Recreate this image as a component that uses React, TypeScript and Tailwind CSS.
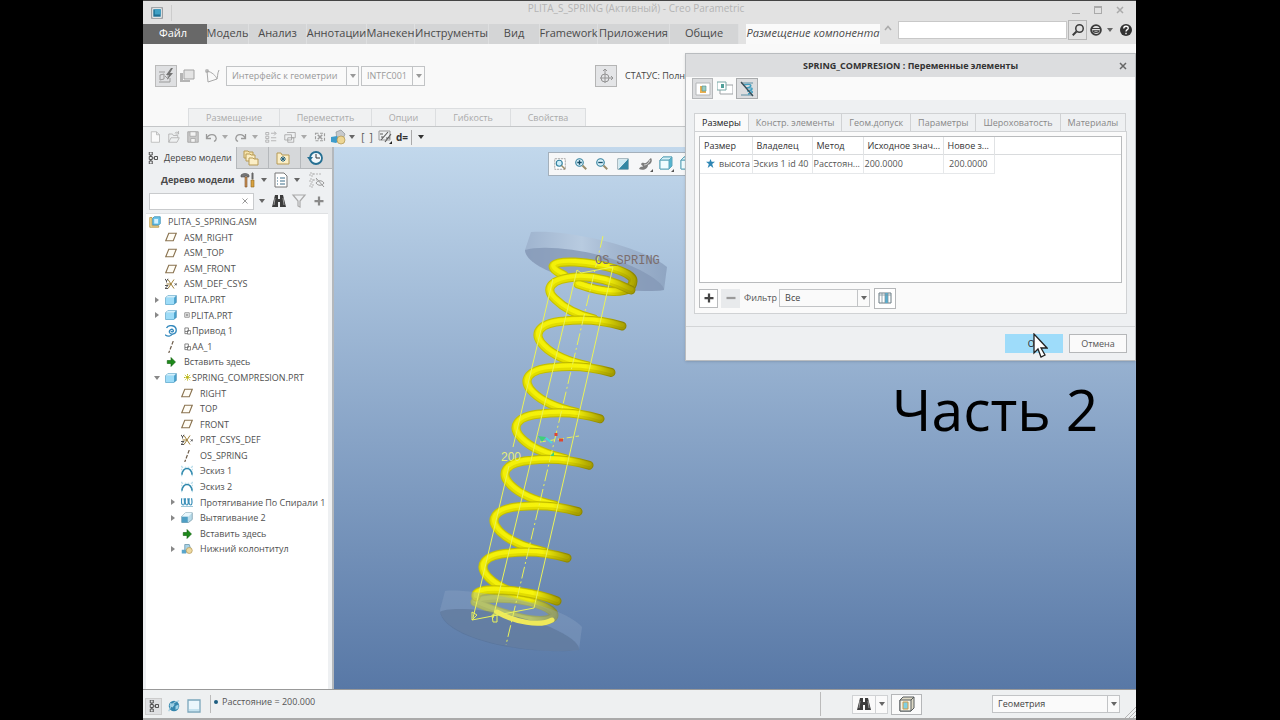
import { useState } from "react";
import type { ReactNode } from "react";
import clsx from "clsx";

type IconProps = { className?: string };

const Svg = ({ className = "h-4 w-4", children }: { className?: string; children: ReactNode }) => (
  <svg viewBox="0 0 16 16" fill="none" className={clsx("block shrink-0", className)} aria-hidden="true">
    {children}
  </svg>
);

/* ---------- icons ---------- */

const Caret = ({ className = "h-2 w-2 text-[#666]" }: IconProps) => (
  <Svg className={className}>
    <path d="M2 4h12l-6 8z" fill="currentColor" />
  </Svg>
);

const AppIcon = () => (
  <Svg className="h-3 w-3">
    <path d="M1 1h14v14H1z" fill="#fff" stroke="#8b8f93" strokeWidth="1.5" />
    <path d="M3 3h10v10H3z" fill="#1f6f93" />
    <path d="M5 3h8v7H5z" fill="#3fa0c4" />
  </Svg>
);

const PlaneIcon = () => (
  <Svg className="h-3 w-3">
    <path d="M5 3h10l-4 10H1z" stroke="#8a7350" strokeWidth="1.5" fill="#fffdf6" />
  </Svg>
);

const CsysIcon = () => (
  <Svg className="h-3 w-3">
    <path d="M8 8 4 2M8 8l4-6M8 8l-4 6M8 8l4 6M8 8H2" stroke="#9a7a30" strokeWidth="1.3" />
    <path d="M0 1l2 3 2-3M2 4v2M0 10h4l-4 4h4M13 7l3 3M16 7l-3 3" stroke="#444" strokeWidth="1.2" />
  </Svg>
);

const AxisIcon = () => (
  <Svg className="h-3 w-3">
    <path d="M11 0 5 16" stroke="#6d5c4a" strokeWidth="1.6" strokeDasharray="5 2" />
  </Svg>
);

const AsmIcon = () => (
  <Svg className="h-3 w-3">
    <path d="M1 2h3v11h9v2H1z" fill="#f3dc97" stroke="#b08d3a" />
    <path d="M5 3l2-2h8v9l-2 2H5z" fill="#6fc5ea" stroke="#2d86ae" />
    <path d="M7 4h5v6H7z" fill="#d5f2ff" />
  </Svg>
);

const PartIcon = () => (
  <Svg className="h-3 w-3">
    <path d="M1 5l3-3h11v9l-3 3H1z" fill="#4fa6d0" stroke="#3684ad" />
    <path d="M1 5h11v9H1z" fill="#9ddcf8" />
    <path d="M1 5l3-3h11l-3 3z" fill="#d3f1fd" />
  </Svg>
);

const MotorIcon = () => (
  <Svg className="h-3 w-3">
    <path d="M2 4c3-5 13-4 13 3 0 5-7 7-9 3-1-3 3-6 5-3 1 2-2 3-3 1" stroke="#3489bd" strokeWidth="1.8" />
    <path d="M0 13c4 3 8 2 10-1" stroke="#3489bd" strokeWidth="1.8" />
  </Svg>
);

const InsertIcon = () => (
  <Svg className="h-3 w-3">
    <path d="M3 6h5V2l6 6-6 6v-4H3z" fill="#1d8a1a" stroke="#0d5c0c" strokeWidth="0.8" />
  </Svg>
);

const SketchIcon = () => (
  <Svg className="h-3 w-3">
    <path d="M1 13c2-11 12-11 14 0" stroke="#2c86ab" strokeWidth="2" />
    <path d="M1 1v14M15 1v14M1 3h14" stroke="#8cc5dc" strokeDasharray="2 2" />
  </Svg>
);

const HelixIcon = () => (
  <Svg className="h-3 w-3">
    <path d="M1 3c-1 6 0 9 2 9s2-5 1-9M6 3c-1 6 0 9 2 9s2-5 1-9M11 3c-1 6 0 9 2 9s2-5 1-9" stroke="#3a8fb8" strokeWidth="1.6" />
    <path d="M0 14h16" stroke="#7cb4cc" />
  </Svg>
);

const ExtrudeIcon = () => (
  <Svg className="h-3 w-3">
    <path d="M6 1h9v9l-5 4H1V6z" fill="#b9dcea" stroke="#7195a5" />
    <path d="M1 6h8v8H1z" fill="#4f9fc4" />
    <path d="M6 1h9l-5 5H1z" fill="#e9f7fc" />
  </Svg>
);

const FooterIcon = () => (
  <Svg className="h-3 w-3">
    <path d="M5 2h6l2 6-3 4H5z" fill="#a9d3e6" stroke="#6692a8" />
    <path d="M1 9h6v5H1z" fill="#5aa5cb" />
    <circle cx="11" cy="10" r="4" fill="#eed9a0" stroke="#b49b5c" />
  </Svg>
);

const TreeIcon = ({ className = "h-3 w-3" }: IconProps) => (
  <Svg className={className}>
    <path d="M3 0h4v4H3zM3 6h4v4H3zM3 12h4v4H3zM10 6h4v4h-4zM5 4v2M5 10v2M7 8h3" stroke="#444" strokeWidth="1.2" />
  </Svg>
);

const FoldersIcon = () => (
  <Svg className="h-4 w-4">
    <path d="M1 1h4l1 1h4v6H1z" fill="#f6e3ab" stroke="#b79a55" />
    <path d="M3 4h4l1 1h4v6H3z" fill="#fbeec6" stroke="#b79a55" />
    <path d="M6 8h4l1 1h4v6H6z" fill="#fbeec6" stroke="#b79a55" />
  </Svg>
);

const FavFolderIcon = () => (
  <Svg className="h-4 w-4">
    <path d="M2 3h4l1 2h7v9H2z" fill="#fbeec6" stroke="#b79a55" />
    <path d="M8 6v6M5 9h6M6 7l4 4M10 7l-4 4" stroke="#256382" />
  </Svg>
);

const HistoryIcon = () => (
  <Svg className="h-4 w-4">
    <circle cx="9" cy="8" r="6" fill="#f1f8fb" stroke="#256f92" strokeWidth="1.8" />
    <path d="M9 4v4h4" stroke="#333" />
    <path d="M0 7h6l-3 4z" fill="#256f92" />
  </Svg>
);

const ToolsIcon = () => (
  <Svg className="h-4 w-4">
    <path d="M1 5V3c2-2 6-2 8 0v2H7v-1H5v1z" fill="#777" stroke="#555" strokeWidth="0.6" />
    <path d="M5 5h2v10H5z" fill="#c98f55" stroke="#7d5529" strokeWidth="0.6" />
    <path d="M12 1h1v6h-1z" fill="#666" stroke="#666" />
    <path d="M11 8h3v7h-3z" fill="#d9a23f" stroke="#8a6524" strokeWidth="0.6" />
  </Svg>
);

const ListIcon = () => (
  <Svg className="h-4 w-4">
    <path d="M2 1h9l3 3v11H2z" fill="#fff" stroke="#777" />
    <path d="M4 6h1M7 6h5M4 9h1M7 9h5M4 12h1M7 12h5" stroke="#3a6d88" />
  </Svg>
);

const TreeOffIcon = () => (
  <Svg className="h-4 w-4">
    <path d="M1 1h3v3H1zM1 7h3v3H1zM1 12h3v3H1zM4 2h9M4 8h4" stroke="#b5b5b5" strokeDasharray="2 1" />
    <path d="M7 11c2-3 6-3 8 0-2 3-6 3-8 0zM7 6l8 9" stroke="#999" />
  </Svg>
);

const Binoculars = ({ className = "h-4 w-4" }: IconProps) => (
  <Svg className={className}>
    <path d="M4 2h3v4h2V2h3l3 12H9V9H7v5H1z" fill="#3c3c3c" />
    <path d="M4 5l-1 7M12 5l1 7" stroke="#999" />
  </Svg>
);

const FilterIcon = () => (
  <Svg className="h-4 w-4">
    <path d="M2 2h12L9 8v6l-2-1V8z" stroke="#aaa" strokeWidth="1.2" />
  </Svg>
);

const PlusIcon = ({ className = "h-3 w-3 text-[#8a8a8a]" }: IconProps) => (
  <Svg className={className}>
    <path d="M8 2v12M2 8h12" stroke="currentColor" strokeWidth="3" />
  </Svg>
);

const MinusIcon = () => (
  <Svg className="h-3 w-3">
    <path d="M2 8h12" stroke="#9a9a9a" strokeWidth="3" />
  </Svg>
);

const CloseIcon = ({ className = "h-2 w-2 text-[#666]" }: IconProps) => (
  <Svg className={className}>
    <path d="M2 2l12 12M14 2 2 14" stroke="currentColor" strokeWidth="3" />
  </Svg>
);

const GreyNew = () => (
  <Svg className="h-3 w-3">
    <path d="M3 1h7l4 4v10H3zM10 1v4h4" stroke="#b0b0b0" fill="#fafafa" />
  </Svg>
);
const GreyOpen = () => (
  <Svg className="h-3 w-3">
    <path d="M1 15V4h5l1 2h6v3M1 15l3-6h11l-3 6zM9 3c2-2 4-2 5 0M14 0v4h-4" stroke="#a9a9a9" />
  </Svg>
);
const GreySave = () => (
  <Svg className="h-3 w-3">
    <path d="M1 1h14v14H1z" fill="#c9c9c9" stroke="#9c9c9c" />
    <path d="M4 1h8v6H4zM5 10h6v5H5z" fill="#f3f3f3" stroke="#a4a4a4" />
  </Svg>
);
const UndoIcon = ({ className = "h-3 w-3" }: IconProps) => (
  <Svg className={className}>
    <path d="M2 4v6h6M2 10c3-7 12-7 13 0 0 2-1 3-3 4" stroke="#9a9a9a" strokeWidth="1.7" />
  </Svg>
);
const RegenIcon = () => (
  <Svg className="h-3 w-3">
    <path d="M1 2h4v3H1zM1 7h4v3H1zM1 12h4v3H1zM8 9h7M8 13h7M8 3h6M12 1l3 2-3 3" stroke="#a4a4a4" />
  </Svg>
);
const WindowsIcon = () => (
  <Svg className="h-3 w-3">
    <path d="M1 5h9v7H1zM4 2h11v7h-5M5 9h8v6H5z" stroke="#9d9d9d" />
  </Svg>
);
const CloseWinIcon = () => (
  <Svg className="h-3 w-3">
    <path d="M2 3h12v10H2z" stroke="#9d9d9d" strokeWidth="1.5" strokeDasharray="4 2" />
    <path d="M5 5l6 6M11 5l-6 6" stroke="#9d9d9d" strokeWidth="2" />
  </Svg>
);
const ShapesIcon = () => (
  <Svg className="h-4 w-4">
    <path d="M6 3l5-2 4 4-2 5-6 1z" fill="#c6c9cb" stroke="#8a9096" strokeWidth="0.7" />
    <path d="M1 8l6-1 3 4-4 3-5-1z" fill="#3d9ccb" />
    <circle cx="11" cy="11" r="4" fill="#edd694" stroke="#ad9350" strokeWidth="0.7" />
  </Svg>
);
const PercentIcon = () => (
  <Svg className="h-4 w-4">
    <path d="M2 2h11v9H2z" stroke="#999" />
    <path d="M4 11 11 3M3 5h3M9 9h4M8 13l6-8M4 8h3" stroke="#5a5a5a" strokeWidth="1.1" />
    <path d="M15 12v3h-3z" fill="#222" />
  </Svg>
);

const SearchGlass = () => (
  <Svg className="h-3 w-3">
    <circle cx="10" cy="6" r="5" stroke="#3b3b3b" strokeWidth="2" />
    <path d="M6 10l-5 5" stroke="#3b3b3b" strokeWidth="2.5" />
  </Svg>
);
const PortalIcon = () => (
  <Svg className="h-3 w-3">
    <circle cx="8" cy="8" r="6.5" stroke="#3b3b3b" strokeWidth="2.5" />
    <path d="M2 6h12M4 9h8c0 3-8 3-8 0z" stroke="#3b3b3b" strokeWidth="1.5" />
  </Svg>
);
const HelpIcon = () => (
  <Svg className="h-3 w-3">
    <circle cx="8" cy="8" r="8" fill="#333" />
    <path d="M5 6c0-4 6-4 6-.5 0 2-3 2-3 4.5M8 11.5v2" stroke="#fff" strokeWidth="1.8" />
  </Svg>
);

const ManualIcon = () => (
  <Svg className="h-4 w-4">
    <path d="M1 4h6M1 14h11v-4M2 7l4-1v5l-4 1zM7 8l3 3v-4" stroke="#9a9a9a" />
    <path d="M13 0 8 7h3l-2 5 6-7h-3l3-5z" fill="#747474" />
  </Svg>
);
const CopyIcon = () => (
  <Svg className="h-4 w-4">
    <path d="M5 2h10v9H5z" fill="#e4e4e4" stroke="#a3a3a3" />
    <path d="M1 5h3v7h7v2H1z" fill="#b5b5b5" />
  </Svg>
);
const ConstraintIcon = () => (
  <Svg className="h-4 w-4">
    <circle cx="3" cy="3" r="2" fill="#bbb" />
    <path d="M3 3c5 1 9 5 10 8M15 2c-2 4-1 7-2 9l-9 3-1-11" stroke="#a8a8a8" />
  </Svg>
);
const DragIcon = () => (
  <Svg className="h-4 w-4">
    <circle cx="7" cy="10" r="4" stroke="#949494" />
    <path d="M7 1v14M2 10h13M5 3l2-2 2 2M13 8l2 2-2 2" stroke="#949494" />
  </Svg>
);

const ZoomFitIcon = () => (
  <Svg className="h-3 w-3">
    <path d="M1 1h14v14H1z" fill="#fff" stroke="#8b8b8b" strokeDasharray="3 1" />
    <circle cx="7" cy="7" r="4" fill="#cdeefa" stroke="#33809e" strokeWidth="1.5" />
    <path d="M10 10l5 5" stroke="#9a8d6b" strokeWidth="2" />
  </Svg>
);
const ZoomIcon = ({ plus }: { plus?: boolean }) => (
  <Svg className="h-3 w-3">
    <circle cx="6" cy="6" r="5" fill="#d9f1fa" stroke="#33809e" strokeWidth="1.5" />
    <path d="M10 10l5 5" stroke="#9a8d6b" strokeWidth="2.5" />
    <path d={plus ? "M6 3v6M3 6h6" : "M3 6h6"} stroke="#174e68" strokeWidth="1.8" />
  </Svg>
);
const RepaintIcon = () => (
  <Svg className="h-3 w-3">
    <path d="M1 1h14v14H1z" fill="#fff" stroke="#6e8c98" />
    <path d="M15 1v14H2z" fill="#3387a3" />
    <path d="M2 2v12L14 2z" fill="#cdeaf3" />
  </Svg>
);
const RenderIcon = () => (
  <Svg className="h-4 w-4">
    <path d="M1 13c2-4 3-1 4-3-3-1-2-4 1-3 3 1 5-4 7-5 2 3 0 6-3 7 0 4-5 6-9 4z" fill="#7d7d7d" />
    <path d="M6 9c3 0 5-2 6-5" stroke="#d4d4d4" />
    <path d="M15 13v3h-3z" fill="#555" />
  </Svg>
);
const DisplayCube = () => (
  <Svg className="h-4 w-4">
    <path d="M1 4l3-3h9v9l-3 3H1z" fill="#54b4cf" stroke="#5fa5ba" />
    <path d="M1 4h9v9H1z" fill="#f0fcff" stroke="#5fa5ba" />
    <path d="M1 4l3-3h9l-3 3z" fill="#d6f2f9" stroke="#5fa5ba" />
    <path d="M15 13v3h-3z" fill="#555" />
  </Svg>
);

const ModelWinIcon = () => (
  <Svg className="h-4 w-4">
    <path d="M1 2h14v12H1z" fill="#fff" stroke="#b5b7b9" />
    <path d="M5 5h2v5h4v2H5z" fill="#ecb04e" />
    <path d="M7 5h4v5H7z" fill="#9accc2" stroke="#4d8f8d" strokeWidth="0.6" />
  </Svg>
);
const ModelWin2Icon = () => (
  <Svg className="h-4 w-4">
    <path d="M3 4h13v9H3z" fill="#fff" stroke="#9fa3a6" />
    <path d="M0 1h9v8H0z" fill="#fff" stroke="#79a7a6" />
    <path d="M4 3h3v4H4z" fill="#4f9f99" />
  </Svg>
);
const SpringOffIcon = () => (
  <Svg className="h-4 w-4">
    <path d="M2 2h12M2 14h12" stroke="#5d8ea2" />
    <path d="M4 4c10-2 10 2 3 3 8-1 8 2 1 3 7-1 7 2 1 3" stroke="#3f9ec0" strokeWidth="1.4" />
    <path d="M2 1l12 14" stroke="#3c4c55" strokeWidth="1.3" />
  </Svg>
);
const ColumnsIcon = () => (
  <Svg className="h-4 w-4">
    <path d="M2 3h12v10H2z" fill="#fff" stroke="#6b7a82" />
    <path d="M8 3h3v10H8z" fill="#56aed0" />
    <path d="M2 5h12M5 3v10M8 3v10M11 3v10" stroke="#7e949e" strokeWidth="0.8" />
  </Svg>
);
const GlobeIcon = () => (
  <Svg className="h-3 w-3">
    <circle cx="8" cy="8" r="7" fill="#3586ad" />
    <path d="M3 4l6 2-3 4-4-2zM10 8l4-2v5l-4 2z" fill="#9fd3e8" />
    <path d="M1 15C3 8 8 2 15 1" stroke="#9ecbde" strokeWidth="1.5" />
  </Svg>
);
const BlankWinIcon = () => (
  <Svg className="h-4 w-4">
    <path d="M2 2h12v12H2z" fill="#eaf6fc" stroke="#7ba6bc" strokeWidth="1.3" />
    <path d="M3 11h10v2H3z" fill="#c4e2ef" />
  </Svg>
);
const BoxSelectIcon = () => (
  <Svg className="h-4 w-4">
    <path d="M1 4l3-3h11v11l-3 3H1z" fill="#ded9c5" stroke="#555a5d" />
    <path d="M1 4h11v11H1zM12 4l3-3" stroke="#555a5d" fill="#f6f3e6" />
    <path d="M4 6h5v7H4z" fill="#7fd0e4" stroke="#cf9a4b" />
  </Svg>
);

/* ---------- small controls ---------- */

interface DropdownProps {
  label: string;
  options: string[];
  className?: string;
  muted?: boolean;
}

function Dropdown({ label, options, className, muted }: DropdownProps) {
  return (
    <div className={clsx("relative flex border border-[#c2c4c6] bg-[#fafafa]", className)}>
      <select
        aria-label={label}
        className={clsx(
          "min-w-0 flex-1 appearance-none bg-transparent pl-[5px] text-[9px] outline-none",
          muted ? "text-[#999]" : "text-[#444]"
        )}
      >
        {options.map((o) => (
          <option key={o}>{o}</option>
        ))}
      </select>
      <span className="pointer-events-none flex w-3 items-center justify-center border-l border-[#c2c4c6]">
        <Caret className={clsx("h-2 w-2", muted ? "text-[#999]" : "text-[#666]")} />
      </span>
    </div>
  );
}

/* ---------- top area ---------- */

const ribbonTabs = [
  { label: "Модель", width: "w-[42px]" },
  { label: "Анализ", width: "w-[58px]" },
  { label: "Аннотации", width: "w-[60px]" },
  { label: "Манекен", width: "w-[48px]" },
  { label: "Инструменты", width: "w-[74px]" },
  { label: "Вид", width: "w-[51px]" },
  { label: "Framework", width: "w-[58px]" },
  { label: "Приложения", width: "w-[72px]" },
  { label: "Общие", width: "w-[69px]" },
];

function TitleBar() {
  return (
    <header className="flex h-6 items-center border-t border-[#444] bg-[#e2e2e2]">
      <div className="flex h-4 w-[29px] items-center justify-center border-r border-[#ccc]">
        <AppIcon />
      </div>
      <h1 className="flex-1 pb-2 pl-7 text-center text-[10px] text-[#b4b4b4]">
        PLITA_S_SPRING (Активный) - Creo Parametric
      </h1>
      <div className="flex items-center gap-[14px] pb-[6px] pr-3 text-[#aaa]">
        <button aria-label="Свернуть" className="h-2 w-2 border-b border-current" />
        <button aria-label="Развернуть" className="h-2 w-2 border border-t-2 border-current" />
        <button aria-label="Закрыть">
          <CloseIcon className="h-2 w-2" />
        </button>
      </div>
    </header>
  );
}

function RibbonTabs() {
  return (
    <nav className="flex h-5 bg-[#e2e2e2] text-[11px] leading-[18px] text-[#4a4a4a]">
      <button className="w-16 shrink-0 bg-[#686868] pb-[2px] pr-1 text-white">Файл</button>
      <div className="flex shrink-0 bg-[#d4d5d6]">
        {ribbonTabs.map((tab) => (
          <button
            key={tab.label}
            className={clsx("flex justify-center whitespace-nowrap border-r border-[#dedfe0]", tab.width)}
          >
            {tab.label}
          </button>
        ))}
      </div>
      <button className="ml-[7px] flex w-[134px] shrink-0 justify-center whitespace-nowrap bg-[#fafafa] italic">
        Размещение компонента
      </button>
      <Svg className="ml-1 h-2 w-2 text-[#aaa]">
        <path d="M2 12l6-7 6 7" stroke="currentColor" strokeWidth="3" />
      </Svg>
      <div className="-mt-1 mb-1 ml-[6px] flex min-w-0 flex-1 items-center pr-1">
        <input
          aria-label="Поиск"
          className="h-[18px] min-w-0 flex-1 border border-[#c8c8c8] bg-white px-1 outline-none"
        />
        <button
          aria-label="Найти"
          className="ml-px flex h-5 w-[19px] shrink-0 items-center justify-center border border-[#b5b5b5]"
        >
          <SearchGlass />
        </button>
        <button aria-label="Портал" className="ml-[3px] flex items-center gap-1">
          <PortalIcon />
          <Caret />
        </button>
        <button aria-label="Справка" className="ml-[6px]">
          <HelpIcon />
        </button>
      </div>
    </nav>
  );
}

const dashboardTabs = [
  { label: "Размещение", width: "w-[91px]" },
  { label: "Переместить", width: "w-[92px]" },
  { label: "Опции", width: "w-[64px]" },
  { label: "Гибкость", width: "w-[75px]" },
  { label: "Свойства", width: "w-[75px]" },
];

function Dashboard() {
  return (
    <section className="flex h-[83px] flex-col justify-between border-b border-[#c4c6c8] bg-[#f9f9f9] pt-5">
      <div className="flex h-6 items-center pl-3">
        <button
          aria-label="Разместить вручную"
          className="flex h-[22px] w-[22px] items-center justify-center border border-[#bbb] bg-[#dfe0e2]"
        >
          <ManualIcon />
        </button>
        <button aria-label="Интерфейс" className="ml-[2px]">
          <CopyIcon />
        </button>
        <button aria-label="Ограничения" className="ml-[9px]">
          <ConstraintIcon />
        </button>
        <Dropdown label="Тип интерфейса" options={["Интерфейс к геометрии"]} className="ml-[6px] h-5 w-[133px]" muted />
        <Dropdown label="Интерфейс" options={["INTFC001"]} className="ml-[2px] h-5 w-[64px]" muted />
        <button
          aria-label="Перетащить"
          className="ml-[170px] flex h-[22px] w-[22px] items-center justify-center border border-[#b5b5b5] bg-[#e4e5e7]"
        >
          <DragIcon />
        </button>
        <p className="ml-2 whitespace-nowrap text-[9px] text-[#444]">СТАТУС: Полностью ограничено</p>
      </div>
      <div className="ml-[45px] flex h-[18px] self-start border-l border-t border-[#dcdee0] bg-[#f0f1f2]">
        {dashboardTabs.map((tab) => (
          <button key={tab.label} className={clsx("border-r border-[#dcdee0] text-[9px] text-[#aaa]", tab.width)}>
            {tab.label}
          </button>
        ))}
      </div>
    </section>
  );
}

function QuickAccess() {
  return (
    <div className="flex h-5 items-center bg-[#eef0f1] pl-[6px] text-[10px] text-[#666]">
      <div className="flex items-center gap-[7px]">
        <button aria-label="Создать"><GreyNew /></button>
        <button aria-label="Открыть"><GreyOpen /></button>
        <button aria-label="Сохранить"><GreySave /></button>
      </div>
      <button aria-label="Отменить" className="ml-[6px] flex items-center gap-1">
        <UndoIcon />
        <Caret className="h-2 w-2 text-[#aaa]" />
      </button>
      <button aria-label="Повторить" className="ml-[6px] flex items-center gap-1">
        <UndoIcon className="h-3 w-3 -scale-x-100" />
        <Caret className="h-2 w-2 text-[#aaa]" />
      </button>
      <button aria-label="Регенерировать" className="ml-[6px]"><RegenIcon /></button>
      <button aria-label="Окна" className="ml-[7px] flex items-center gap-1">
        <WindowsIcon />
        <Caret className="h-2 w-2 text-[#aaa]" />
      </button>
      <button aria-label="Закрыть окно" className="ml-[6px]"><CloseWinIcon /></button>
      <button aria-label="Сечение" className="ml-[4px] flex items-center gap-[2px]">
        <ShapesIcon />
        <Caret />
      </button>
      <button className="ml-[3px] w-4 whitespace-nowrap text-[#555]">[&nbsp;&nbsp;]</button>
      <button aria-label="Отношения" className="ml-[2px]"><PercentIcon /></button>
      <button className="ml-[3px] border-r border-[#aaa] pr-[3px] font-bold text-[#333]">d=</button>
      <button aria-label="Настроить" className="ml-[5px]"><Caret className="h-2 w-2 text-[#333]" /></button>
    </div>
  );
}

/* ---------- model tree ---------- */

interface TreeNode {
  label: string;
  icon: () => ReactNode;
  level: number;
  arrow?: "open" | "closed";
  mark?: "box" | "link" | "flex";
}

const treeNodes: TreeNode[] = [
  { label: "PLITA_S_SPRING.ASM", icon: AsmIcon, level: 0 },
  { label: "ASM_RIGHT", icon: PlaneIcon, level: 1 },
  { label: "ASM_TOP", icon: PlaneIcon, level: 1 },
  { label: "ASM_FRONT", icon: PlaneIcon, level: 1 },
  { label: "ASM_DEF_CSYS", icon: CsysIcon, level: 1 },
  { label: "PLITA.PRT", icon: PartIcon, level: 1, arrow: "closed" },
  { label: "PLITA.PRT", icon: PartIcon, level: 1, arrow: "closed", mark: "box" },
  { label: "Привод 1", icon: MotorIcon, level: 1, mark: "link" },
  { label: "AA_1", icon: AxisIcon, level: 1, mark: "link" },
  { label: "Вставить здесь", icon: InsertIcon, level: 1 },
  { label: "SPRING_COMPRESION.PRT", icon: PartIcon, level: 1, arrow: "open", mark: "flex" },
  { label: "RIGHT", icon: PlaneIcon, level: 2 },
  { label: "TOP", icon: PlaneIcon, level: 2 },
  { label: "FRONT", icon: PlaneIcon, level: 2 },
  { label: "PRT_CSYS_DEF", icon: CsysIcon, level: 2 },
  { label: "OS_SPRING", icon: AxisIcon, level: 2 },
  { label: "Эскиз 1", icon: SketchIcon, level: 2 },
  { label: "Эскиз 2", icon: SketchIcon, level: 2 },
  { label: "Протягивание По Спирали 1", icon: HelixIcon, level: 2, arrow: "closed" },
  { label: "Вытягивание 2", icon: ExtrudeIcon, level: 2, arrow: "closed" },
  { label: "Вставить здесь", icon: InsertIcon, level: 2 },
  { label: "Нижний колонтитул", icon: FooterIcon, level: 2, arrow: "closed" },
];

const levelPadding = ["pl-[3px]", "pl-[3px]", "pl-[19px]"];

function NodeMark({ mark }: { mark: TreeNode["mark"] }) {
  if (mark === "box") {
    return (
      <Svg className="h-[6px] w-[6px]">
        <path d="M2 2h12v12H2zM6 6h4v4H6z" stroke="#777" strokeWidth="2" />
      </Svg>
    );
  }
  if (mark === "link") {
    return (
      <Svg className="h-2 w-[7px]">
        <path d="M2 1h8v8H2zM8 7h7v8H8zM2 9v5h6" stroke="#666" strokeWidth="1.8" />
      </Svg>
    );
  }
  return (
    <Svg className="h-[7px] w-[7px]">
      <path d="M8 0v16M0 8h16M2 2l12 12M14 2 2 14" stroke="#b5b000" strokeWidth="2" strokeDasharray="3 1" />
    </Svg>
  );
}

function ModelTree() {
  return (
    <aside className="flex w-[191px] shrink-0 flex-col border-r-2 border-[#b4b8bc] bg-[#eef0f2]">
      <div className="flex h-[22px]">
        <button className="flex flex-1 items-center gap-[5px] whitespace-nowrap pl-1 text-[9px] text-[#444]">
          <TreeIcon />
          Дерево модели
        </button>
        {[
          { label: "Папки", icon: <FoldersIcon /> },
          { label: "Избранное", icon: <FavFolderIcon /> },
          { label: "Журнал", icon: <HistoryIcon /> },
        ].map((t) => (
          <button
            key={t.label}
            aria-label={t.label}
            className="flex w-8 items-center justify-center border-b border-l border-[#b5b8bb] bg-[#d6d8da] pr-1"
          >
            {t.icon}
          </button>
        ))}
      </div>
      <div className="flex h-[22px] items-center pl-[18px]">
        <h2 className="flex-1 whitespace-nowrap text-[9px] font-bold text-[#4a4a4a]">Дерево модели</h2>
        <button aria-label="Настройки" className="flex items-center gap-[4px]">
          <ToolsIcon />
          <Caret />
        </button>
        <button aria-label="Показать" className="ml-[5px] flex items-center gap-1">
          <ListIcon />
          <Caret />
        </button>
        <button aria-label="Скрыть" className="ml-2 mr-[7px]"><TreeOffIcon /></button>
      </div>
      <div className="flex h-[20px] items-center pl-[6px]">
        <label className="flex h-[17px] min-w-0 flex-1 items-center border border-[#c9cbcd] bg-white pr-1">
          <input aria-label="Поиск в дереве" className="h-full min-w-0 flex-1 px-1 text-[9px] outline-none" />
          <Svg className="h-2 w-2 text-[#999]">
            <path d="M3 3l10 10M13 3 3 13" stroke="currentColor" strokeWidth="2" />
          </Svg>
        </label>
        <button aria-label="Параметры поиска" className="ml-1"><Caret /></button>
        <button aria-label="Найти" className="ml-[5px]"><Binoculars /></button>
        <button aria-label="Фильтр" className="ml-1"><FilterIcon /></button>
        <button aria-label="Добавить" className="ml-[6px] mr-[7px]"><PlusIcon /></button>
      </div>
      <div className="ml-[3px] mr-1 mt-[2px] flex-1 border-t border-[#dfe1e3] bg-white">
        <ul className="grid h-[343px] auto-rows-fr text-[9px] text-[#505050]">
          {treeNodes.map((node, i) => (
            <li key={i} className={clsx("flex items-center whitespace-nowrap", levelPadding[node.level])}>
              {node.level > 0 && (
                <span className="flex w-4 items-center pl-1">
                  {node.arrow && (
                    <Caret className={clsx("h-2 w-2 text-[#888]", node.arrow === "closed" && "-rotate-90")} />
                  )}
                </span>
              )}
              <node.icon />
              <span className="ml-[7px] flex items-center gap-px">
                {node.mark && <NodeMark mark={node.mark} />}
                {node.label}
              </span>
            </li>
          ))}
        </ul>
      </div>
    </aside>
  );
}

/* ---------- graphics area ---------- */

const COIL = "M622 326 C602 320 582 319 564 321 C538 323 532 334 544 346 C554 356 570 362 588 366";
const coilOffsets = [0, 1, 2, 3, 4, 5];

function Wire({ d, faded }: { d: string; faded?: boolean }) {
  return (
    <g fill="none" strokeLinecap="round" strokeLinejoin="round" opacity={faded ? 0.7 : 1}>
      <path d={d} stroke="url(#wireEdge)" strokeWidth="9" />
      <path d={d} stroke="url(#wireBody)" strokeWidth="7" />
      <path d={d} stroke="url(#wireShine)" strokeWidth="4" transform="translate(0 -1)" />
    </g>
  );
}

function SpringModel() {
  return (
    <svg
      viewBox="334 147 801 542"
      preserveAspectRatio="xMinYMin meet"
      className="block h-full w-full"
      role="img"
      aria-label="SPRING_COMPRESION"
    >
      <defs>
        <linearGradient id="wireEdge">
          <stop offset="0" stopColor="#c6c200" />
          <stop offset="0.8" stopColor="#b8b200" />
          <stop offset="1" stopColor="#8c8500" />
        </linearGradient>
        <linearGradient id="wireBody">
          <stop offset="0" stopColor="#e2de00" />
          <stop offset="0.7" stopColor="#e2dc00" />
          <stop offset="1" stopColor="#a39b00" />
        </linearGradient>
        <linearGradient id="wireShine">
          <stop offset="0" stopColor="#f3f008" />
          <stop offset="0.7" stopColor="#f7f40c" />
          <stop offset="1" stopColor="#aea600" />
        </linearGradient>
        <linearGradient id="diskSide">
          <stop offset="0" stopColor="#9fb4cf" />
          <stop offset="0.4" stopColor="#b8cbe0" />
          <stop offset="0.6" stopColor="#a5b9d2" />
          <stop offset="1" stopColor="#8fa5c2" />
        </linearGradient>
      </defs>

      {/* upper plate */}
      <path d="M531 232 C565 229 640 245 667 267 L664 290 C620 296 526 274 525 250 Z" fill="url(#diskSide)" />
      <path
        d="M525 250 C545 244 600 250 640 270 C655 278 664 285 664 290 C620 296 526 274 525 250 Z"
        fill="#8599b6"
        opacity="0.8"
      />

      <Wire d="M564 275 C546 267 551 261 575 262 C606 264 634 273 633 281 C632 297 600 292 578 284" />
      <Wire d="M631 290 C613 281 594 276 576 277 C550 279 544 289 555 299 C564 308 577 315 594 319" />
      {coilOffsets.map((n) => (
        <g key={n} transform={`translate(${n * -11} ${n * 46.4})`}>
          <Wire d={COIL} />
        </g>
      ))}
      <Wire faded d="M475 602 C485 597 510 597 530 602 C550 607 558 614 552 618 C538 626 500 613 475 602" />
      <Wire d="M557 601 C535 592 505 589 487 590 C479 591 475 593 476 597" />

      {/* lower plate, translucent */}
      <path d="M445 591 C465 588 560 602 582 627 L579 650 C530 656 442 638 440 610 Z" fill="#8ea6c6" opacity="0.35" />
      <path
        d="M440 612 C448 606 500 608 550 627 C570 636 580 644 579 650 C530 656 445 640 440 612 Z"
        fill="#566d8f"
        opacity="0.5"
      />
      <path d="M497 612 C515 622 540 627 552 620" stroke="#efe95a" strokeWidth="5" fill="none" strokeLinecap="round" />

      {/* datum lines */}
      <g stroke="#eaf25a" strokeWidth="1" fill="none">
        <path d="M553 279 513 447M509 466 473 618M577 270 493 618M613 267 534 608M472 620 534 608" />
        <path d="M577 270l4 3 32-6" />
        <path d="M603 236 506 645" strokeDasharray="12 3 2 3" />
        <path d="M472 612v8l5-5zM492 615h5v7h-4z" />
        <path d="M540 442 579 436" strokeDasharray="6 3" />
      </g>
      <path d="M538 436l8 1-4 5zM550 456h4v-4z" fill="#3fd07a" />
      <path d="M546 438l6 5" stroke="#4bd6dc" strokeWidth="2" />
      <path d="M556 433v3M559 440h4" stroke="#e0452f" strokeWidth="3" />
      <text x="501" y="461" fontSize="12" fill="#e6ee7a" fontFamily="Liberation Sans, sans-serif">200</text>
      <text x="595" y="264" fontSize="12" fill="#7b6d6c" fontFamily="Liberation Mono, monospace">OS_SPRING</text>
    </svg>
  );
}

function GraphicsArea() {
  return (
    <main className="relative min-w-0 flex-1 bg-linear-to-b from-[#c2d8ec] to-[#5878a6]">
      <SpringModel />
      <div className="absolute left-[214px] top-[5px] flex h-6 w-40 items-center gap-[9px] border border-[#a4b0bb] bg-[#f6f7f8] pl-[5px]">
        <button aria-label="Вписать"><ZoomFitIcon /></button>
        <button aria-label="Увеличить"><ZoomIcon plus /></button>
        <button aria-label="Уменьшить"><ZoomIcon /></button>
        <button aria-label="Перерисовать"><RepaintIcon /></button>
        <button aria-label="Рендеринг" className="-mr-1"><RenderIcon /></button>
        <button aria-label="Стиль отображения" className="-mr-1"><DisplayCube /></button>
        <button aria-label="Виды"><DisplayCube /></button>
      </div>
      <p className="absolute left-[558px] top-[222px] whitespace-nowrap text-[57px] leading-[80px] text-black">Часть 2</p>
    </main>
  );
}

/* ---------- dialog ---------- */

const dialogTabs = ["Размеры", "Констр. элементы", "Геом.допуск", "Параметры", "Шероховатость", "Материалы"];
const columns = [
  { label: "Размер", width: "w-[52px]" },
  { label: "Владелец", width: "w-[60px]" },
  { label: "Метод", width: "w-[51px]" },
  { label: "Исходное знач...", width: "w-[80px]" },
  { label: "Новое з...", width: "w-[51px]" },
];

function VariedItemsDialog() {
  const [activeTab, setActiveTab] = useState(dialogTabs[0]);

  return (
    <div
      role="dialog"
      aria-labelledby="dialog-title"
      className="absolute right-0 top-[53px] flex w-[451px] flex-col border border-[#b9bcbf] bg-[#eef0f2] text-[9px] text-[#555] shadow-sm"
    >
      <div className="flex h-[23px] items-center bg-[#dcdddf] pr-2">
        <h2 id="dialog-title" className="flex-1 pl-4 text-center font-bold text-[#333]">
          SPRING_COMPRESION : Переменные элементы
        </h2>
        <button aria-label="Закрыть окно"><CloseIcon /></button>
      </div>
      <div className="flex h-[23px] items-center bg-[#fafafa] pl-[6px]">
        <button
          aria-label="Модель"
          className="flex h-[21px] w-[21px] items-center justify-center border border-[#b5b7b9] bg-[#dcdddf]"
        >
          <ModelWinIcon />
        </button>
        <button aria-label="Окно модели" className="flex h-[21px] w-[23px] items-center justify-center">
          <ModelWin2Icon />
        </button>
        <button
          aria-label="Скрыть"
          className="flex h-[21px] w-[22px] items-center justify-center border border-[#a9abad] bg-[#dcdddf]"
        >
          <SpringOffIcon />
        </button>
      </div>

      <div className="mx-2 mt-[13px] flex self-start border border-b-0 border-[#d0d2d4]" role="tablist">
        {dialogTabs.map((tab) => (
          <button
            key={tab}
            role="tab"
            aria-selected={tab === activeTab}
            onClick={() => setActiveTab(tab)}
            className={clsx(
              "h-[17px] whitespace-nowrap border-r border-[#d0d2d4] px-[7px] last:border-r-0",
              tab === activeTab ? "bg-[#fafafa] text-[#222]" : "text-[#888]"
            )}
          >
            {tab}
          </button>
        ))}
      </div>
      <div className="mx-2 flex flex-col border border-[#d0d2d4] bg-[#fafafa] px-1 pb-1 pt-1">
        <div className="h-[147px] border border-[#b9bbbd] bg-white">
          <table className="w-full table-fixed border-collapse text-left">
            <thead>
              <tr className="h-[17px] border-b border-[#d9dbdd] text-[#333]">
                {columns.map((c) => (
                  <th
                    key={c.label}
                    className={clsx("whitespace-nowrap border-r border-[#e0e2e4] pl-1 font-normal", c.width)}
                  >
                    {c.label}
                  </th>
                ))}
                <th aria-label="Прочее" />
              </tr>
            </thead>
            <tbody>
              <tr className="h-[19px]">
                <td className="border-b border-r border-[#e6e8ea]">
                  <span className="flex items-center gap-1 pl-[6px]">
                    <Svg className="h-[9px] w-[9px]">
                      <path d="M8 0l2 5h6l-5 4 2 7-5-4-5 4 2-7-5-4h6z" fill="#2f86b4" />
                    </Svg>
                    высота
                  </span>
                </td>
                <td className="whitespace-nowrap border-b border-r border-[#e6e8ea] pl-px">Эскиз 1 id 40</td>
                <td className="whitespace-nowrap border-b border-r border-[#e6e8ea] pl-px">Расстоян...</td>
                <td className="border-b border-r border-[#e6e8ea] pl-px">200.0000</td>
                <td className="border-b border-r border-[#e6e8ea] pr-[6px] text-right">200.0000</td>
              </tr>
            </tbody>
          </table>
        </div>
        <div className="mt-1 flex h-[22px] items-center">
          <button
            aria-label="Добавить"
            className="flex h-[19px] w-[19px] items-center justify-center border border-[#b9bbbd] bg-white"
          >
            <PlusIcon className="h-3 w-3 text-[#444]" />
          </button>
          <button aria-label="Удалить" className="ml-[3px] flex h-[19px] w-[19px] items-center justify-center bg-[#e8eaec]">
            <MinusIcon />
          </button>
          <span className="ml-1">Фильтр</span>
          <Dropdown label="Фильтр" options={["Все"]} className="ml-[2px] h-[18px] w-[91px]" />
          <button
            aria-label="Столбцы"
            className="ml-1 flex h-[21px] w-[22px] items-center justify-center border border-[#b5b7b9] bg-white"
          >
            <ColumnsIcon />
          </button>
        </div>
      </div>

      <div className="mt-3 flex h-[34px] items-center justify-end gap-[6px] border-t border-[#d3d5d7] pr-2">
        <button className="h-[19px] w-[58px] bg-[#9edcfa] text-[#222]">ОК</button>
        <button className="h-[19px] w-[58px] border border-[#b5b7b9] bg-[#fafafa]">Отмена</button>
      </div>

      {/* mouse pointer over the OK button */}
      <svg
        viewBox="0 0 16 26"
        className="pointer-events-none absolute bottom-px right-[87px] h-[26px] w-4"
        aria-hidden="true"
      >
        <path d="M2 1v19l4-4 3 8 4-2-4-7h6z" fill="#fff" stroke="#222" strokeWidth="1.3" />
      </svg>
    </div>
  );
}

/* ---------- status bar ---------- */

function StatusBar() {
  return (
    <footer className="flex h-[31px] items-center border-b-2 border-t border-b-[#aaa] border-t-[#999] bg-[#eef0f1] pl-[2px] text-[9px] text-[#555]">
      <button
        aria-label="Дерево"
        className="mt-1 flex h-[17px] w-[17px] items-center justify-center border border-[#ccc] bg-[#dfe0e2]"
      >
        <TreeIcon />
      </button>
      <button aria-label="Браузер" className="ml-[6px] mt-1"><GlobeIcon /></button>
      <button aria-label="Полный экран" className="ml-[6px] mt-1"><BlankWinIcon /></button>
      <div className="ml-2 h-[18px] border-l border-[#bbb]" />
      <p className="flex flex-1 items-center gap-1 pb-1 pl-[3px]">
        <span className="h-1 w-1 rounded-full bg-[#1c5d80]" />
        Расстояние = 200.000
      </p>
      <div className="mr-[31px] h-6 border-l border-[#bbb]" />
      <div className="flex h-[19px] border border-[#d0d2d4] bg-[#fafafa]">
        <button aria-label="Найти" className="flex w-[22px] items-center justify-center"><Binoculars /></button>
        <button aria-label="Параметры" className="flex w-3 items-center justify-center border-l border-[#d0d2d4]">
          <Caret />
        </button>
      </div>
      <button
        aria-label="Выбор рамкой"
        className="ml-[3px] flex h-[21px] w-[31px] items-center justify-center border border-[#b5b7b9] bg-[#fafafa]"
      >
        <BoxSelectIcon />
      </button>
      <Dropdown label="Фильтр выбора" options={["Геометрия"]} className="ml-[70px] h-[18px] w-[128px]" />
      <svg viewBox="0 0 12 12" className="ml-1 h-3 w-3 self-end" stroke="#b5b5b5" aria-hidden="true">
        <path d="M1 12 12 1M5 12l7-7M9 12l3-3" />
      </svg>
    </footer>
  );
}

export default function App() {
  return (
    <div className="flex h-screen min-h-[600px] bg-black pl-[143px] pr-[144px] font-['Open_Sans','Noto_Sans',sans-serif]">
      <div className="relative flex min-w-0 flex-1 flex-col overflow-hidden bg-[#eef0f1]">
        <TitleBar />
        <RibbonTabs />
        <Dashboard />
        <QuickAccess />
        <div className="flex min-h-0 flex-1">
          <ModelTree />
          <GraphicsArea />
        </div>
        <StatusBar />
        <VariedItemsDialog />
      </div>
    </div>
  );
}
